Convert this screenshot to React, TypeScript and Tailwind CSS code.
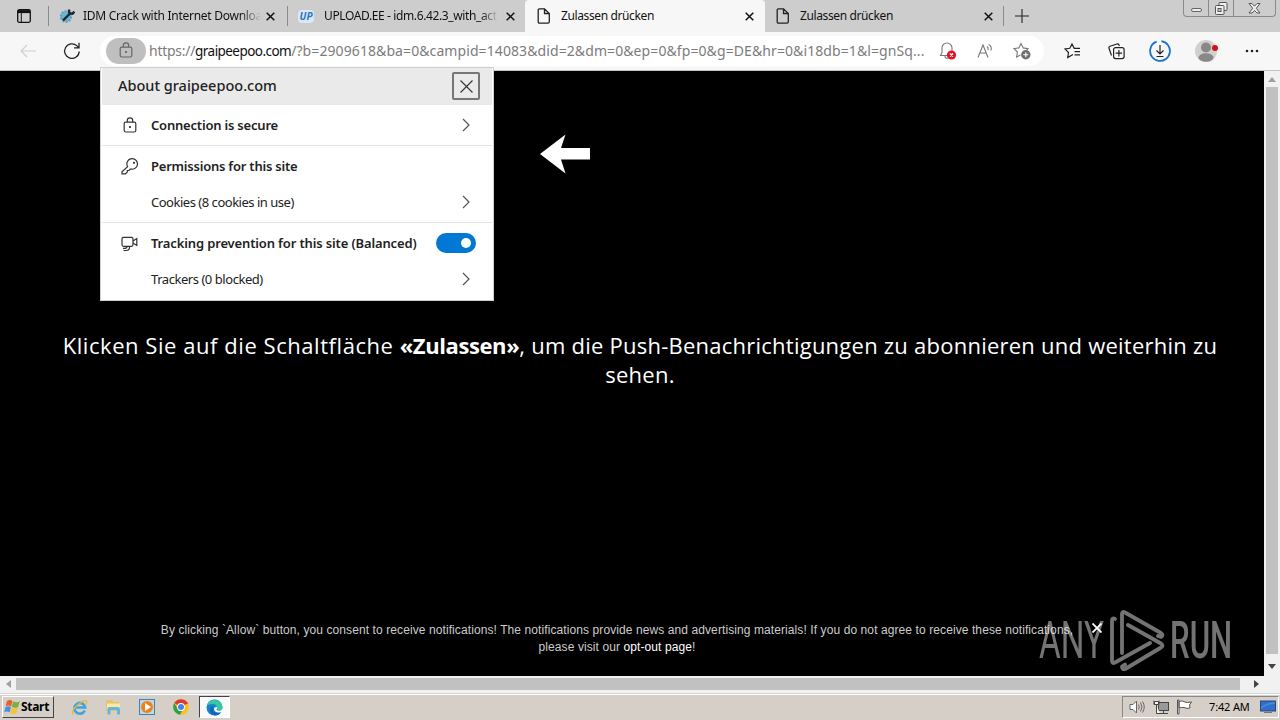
import React from "react";

type P = { children?: React.ReactNode; className?: string };

const Close = ({ className = "" }: P) => (
  <svg className={className} width="9" height="9" viewBox="0 0 9 9" fill="none" stroke="currentColor" strokeWidth="1.5">
    <path d="M.7.7l7.6 7.6M8.3.7L.7 8.3" />
  </svg>
);

const PageIcon = () => (
  <svg width="14" height="16" viewBox="0 0 14 16" fill="none" stroke="#222" strokeWidth="1.3">
    <path d="M2.5.8h5L12.3 5.5v8.3q0 1.3-1.3 1.3H2.5q-1.3 0-1.3-1.3V2.1Q1.2.8 2.5.8zM7.5.8v4.7h4.8" />
  </svg>
);

const Lock = ({ className = "" }: P) => (
  <svg className={className} width="14" height="16" viewBox="0 0 14 16" fill="none" stroke="currentColor" strokeWidth="1.2">
    <rect x="1.2" y="5.2" width="11.6" height="9.8" rx="1.5" />
    <path d="M4.3 5V3.5a2.7 2.7 0 015.4 0V5" />
    <circle cx="7" cy="10" r=".5" fill="currentColor" />
  </svg>
);

const Chevron = () => (
  <svg className="mb-px" width="8" height="14" viewBox="0 0 8 14" fill="none" stroke="#555" strokeWidth="1.2">
    <path d="M1 1l6 6-6 6" />
  </svg>
);

function TabBar() {
  return (
    <div className="flex h-8 shrink-0 bg-[#cdcdcd] text-[12px] text-[#111]">
      <div className="flex w-12 items-center pl-[17px]">
        <svg width="14" height="14" viewBox="0 0 14 14" fill="none" stroke="#111" strokeWidth="1.3">
          <rect x=".7" y=".7" width="12.6" height="12.6" rx="1.5" />
          <path d="M1 2.6h12" strokeWidth="3" />
          <path d="M4.3 4v9" strokeWidth="1" />
        </svg>
      </div>
      <div className="flex w-[239px] items-center">
        <i className="h-5 w-px bg-[#8b8b8b]" />
        <svg className="ml-2.5" width="16" height="16" viewBox="0 0 16 16">
          <circle cx="7" cy="8.5" r="5.2" fill="#6fb3d6" stroke="#5b9fc4" strokeWidth="2" strokeDasharray="2 1.2" />
          <path d="M4 12.500L11 5.500M10 1.500l.3 3.600 3.200.6 2-2" stroke="#1c2830" strokeWidth="2.4" fill="none" />
        </svg>
        <span className="ml-2 w-[178px] bg-linear-to-r from-[#111] from-88% to-[#cdcdcd] bg-clip-text whitespace-nowrap text-transparent tracking-[-0.27px]">IDM Crack with Internet Downloa</span>
        <Close className="ml-[5px]" />
      </div>
      <div className="flex w-[238px] items-center">
        <i className="h-5 w-px bg-[#8b8b8b]" />
        <span className="ml-2.5 w-4 rounded-sm bg-[#dbe7f2] text-center text-[10px] leading-[13px] font-bold text-[#2878c8] italic">UP</span>
        <span className="ml-[10px] w-[174px] bg-linear-to-r from-[#111] from-90% to-[#cdcdcd] bg-clip-text whitespace-nowrap text-transparent tracking-[-0.38px]">UPLOAD.EE - idm.6.42.3_with_act</span>
        <Close className="ml-[8px]" />
      </div>
      <div className="flex w-[240px] items-center rounded-t bg-[#f7f7f7] pl-[12px]">
        <PageIcon />
        <span className="ml-[10px] w-[184px] whitespace-nowrap tracking-[-0.38px]">Zulassen drücken</span>
        <Close />
      </div>
      <div className="flex w-[238px] items-center pl-[11px]">
        <PageIcon />
        <span className="ml-[10px] w-[184px] whitespace-nowrap tracking-[-0.38px]">Zulassen drücken</span>
        <Close />
      </div>
      <div className="flex w-[180px] items-center">
        <i className="h-5 w-px bg-[#8b8b8b]" />
        <svg className="ml-[11px]" width="14" height="14" viewBox="0 0 14 14" stroke="#222" strokeWidth="1.1"><path d="M7 0v14M0 7h14" /></svg>
      </div>
      <div className="flex h-[17px] w-[93px] rounded-b border border-t-0 border-[#8a8a8a] text-[#555]">
        <div className="flex w-[25px] items-end justify-center border-r border-[#8a8a8a] pb-1">
          <i className="h-1 w-[11px] rounded-sm border border-[#666] bg-[#eee]" />
        </div>
        <div className="flex w-[25px] items-center justify-center border-r border-[#8a8a8a]">
          <svg width="13" height="13" viewBox="0 0 13 13" fill="#eee" stroke="#555"><rect x="4" y=".5" width="8" height="8" rx="1" /><rect x=".5" y="3.5" width="8.5" height="9" rx="1" /><rect x="3" y="6.5" width="3" height="3" fill="#ccc" /></svg>
        </div>
        <div className="flex flex-1 items-center justify-center">
          <svg width="13" height="11" viewBox="0 0 13 11" fill="#eee" stroke="#555"><path d="M1 .5h3l2.5 2.7L9 .5h3L8.3 5.3 12 10H9L6.5 7.4 4 10H1l3.7-4.7z" /></svg>
        </div>
      </div>
    </div>
  );
}

function Toolbar() {
  return (
    <div className="flex h-[39px] shrink-0 items-center border-b border-[#c4c4c4] bg-[#f7f7f7]">
      <svg className="ml-5" width="16" height="14" viewBox="0 0 16 14" fill="none" stroke="#cfcfcf" strokeWidth="1.2"><path d="M16 7H1M7 1L1 7l6 6" /></svg>
      <svg className="ml-[27px]" width="18" height="18" viewBox="0 0 18 18" fill="none" stroke="#222" strokeWidth="1.3"><path d="M16.2 9.4A7.3 7.3 0 1 1 14 3.9L15.8 5.7M16 .8v5h-5" /></svg>
      <div className="ml-[19px] flex h-[30px] w-[944px] items-center rounded-full bg-white">
        <div className="ml-1.5 flex h-[26px] w-10 items-center justify-center rounded-full bg-[#bfbfbf] text-[#666]">
          <Lock className="mb-0.5" />
        </div>
        <div className="ml-[3px] w-[776px] text-[14px] leading-5 whitespace-nowrap text-[#7c7c7c]">
          <span className="tracking-[-0.27px]">https://</span><span className="text-[13.500px] tracking-[-0.550px] text-[#111]">graipeepoo.com</span><span className="tracking-[0.09px]">/?b=2909618&amp;ba=0&amp;campid=14083&amp;did=2&amp;dm=0&amp;ep=0&amp;fp=0&amp;g=DE&amp;hr=0&amp;i18db=1&amp;l=gnSq...</span>
        </div>
        <svg className="ml-[14px]" width="20" height="18" viewBox="0 0 20 18" fill="none" stroke="#777" strokeWidth="1.1">
          <path d="M9 13.5H1.5L3 10.500V6a5 5 0 0110 0v3M6 14a2 2 0 003 2" />
          <circle cx="12.500" cy="13" r="4.600" fill="#e81123" stroke="none" />
          <path d="M11 11.500l3 3m0-3l-3 3" stroke="#fff" strokeWidth="1.4" />
        </svg>
        <svg className="ml-[18px]" width="17" height="16" viewBox="0 0 17 16" fill="none" stroke="#777" strokeWidth="1.1">
          <path d="M1 14.500L6 2l5 12.500M2.800 10h6.400M10 3.500q1.800 1.300 1 3.500M11.700 1.500q3.500 2 2.200 6" />
        </svg>
        <svg className="ml-[19px]" width="18" height="18" viewBox="0 0 18 18" fill="none" stroke="#777" strokeWidth="1.1">
          <path d="M7.500 13.100L3.600 15l.8-5L1 6.600l4.800-.7L8 1.500l2.200 4.400 4.800.7-1.600 1.700" />
          <circle cx="12.800" cy="12.800" r="4.700" fill="#6d6d6d" stroke="none" />
          <path d="M12.800 10.300v5M10.300 12.800h5" stroke="#fff" />
        </svg>
      </div>
      <svg className="ml-5" width="17" height="16" viewBox="0 0 17 16" fill="none" stroke="#222" strokeWidth="1.2">
        <path d="M9 11.500L3.700 14.500l.8-5L1 6l4.800-.7L8 1l2.200 4.300H16M10.500 8.600H16M10.500 11.800H16" />
      </svg>
      <svg className="ml-[27px]" width="17" height="17" viewBox="0 0 17 17" fill="none" stroke="#222" strokeWidth="1.2">
        <rect x="5.600" y="4.600" width="10.500" height="11" rx="2" />
        <path d="M10.900 7v6.500M7.600 10.200h6.500M3.500 12.500L1 5.300Q.5 3.800 2 3.200L9 1q1.500-.4 2 1l.4 1" />
      </svg>
      <svg className="ml-[24px]" width="22" height="22" viewBox="0 0 22 22" fill="none" stroke="#222" strokeWidth="1.2">
        <circle cx="11" cy="11" r="9.900" stroke="#1874cd" strokeWidth="1.800" strokeDasharray="57 5.200" transform="rotate(-82 11 11)" />
        <path d="M11 5v9M7.500 10.500L11 14l3.500-3.500M7.500 16.500h7" />
      </svg>
      <svg className="ml-[24px]" width="24" height="24" viewBox="0 0 24 24">
        <circle cx="11" cy="12" r="11" fill="#d2d0ce" /><circle cx="11" cy="8.500" r="5" fill="#8a8886" /><ellipse cx="11" cy="18.500" rx="7.500" ry="4.300" fill="#8a8886" /><circle cx="20" cy="9" r="3" fill="#d5101c" />
      </svg>
      <svg className="ml-[26px]" width="14" height="4" viewBox="0 0 14 4" fill="#222"><circle cx="2" cy="2" r="1.300" /><circle cx="7" cy="2" r="1.300" /><circle cx="12" cy="2" r="1.300" /></svg>
    </div>
  );
}

function SiteInfo() {
  return (
    <div className="absolute top-[67px] left-[100px] z-10 h-[234px] w-[394px] border border-[#cfcfcf] bg-white px-px text-[13px] text-[#222]">
      <div className="flex h-[37px] items-center bg-[#eaeaea] pb-[2px] pl-4">
        <span className="w-[334px] text-[14.500px] font-medium whitespace-nowrap tracking-[0px]">About graipeepoo.com</span>
        <div className="mt-px flex h-7 w-7 items-center justify-center rounded-xs border-2 border-[#767676]">
          <svg width="13" height="13" viewBox="0 0 13 13" stroke="#333" strokeWidth="1.100"><path d="M.5.5l12 12m0-12l-12 12" /></svg>
        </div>
      </div>
      <div className="flex h-[41px] items-center border-b border-[#e5e5e5] pl-[21px]">
        <Lock className="text-[#333]" />
        <span className="mt-0.5 ml-[14px] w-[311px] font-semibold tracking-[-0.200px]">Connection is secure</span>
        <Chevron />
      </div>
      <div className="flex h-[41px] items-center pl-[19px]">
        <svg width="18" height="17" viewBox="0 0 18 17" fill="none" stroke="#333" strokeWidth="1.200">
          <path d="M6.600 8.600a5.300 5.300 0 114 2.600h-1.400l-1.200 1.300H6.300v1.600L4.500 15.800H1v-2z" /><circle cx="13" cy="4.800" r=".5" />
        </svg>
        <span className="ml-3 font-semibold tracking-[-0.220px]">Permissions for this site</span>
      </div>
      <div className="flex h-[36px] items-center border-b border-[#e5e5e5] pb-[4px] pl-[49px]">
        <span className="w-[311px] tracking-[-0.480px]">Cookies (8 cookies in use)</span>
        <Chevron />
      </div>
      <div className="flex h-[41px] items-center pl-[19px]">
        <svg width="17" height="16" viewBox="0 0 17 16" fill="none" stroke="#333" strokeWidth="1.200"><rect x="1" y="1.300" width="11" height="9" rx="1.500" /><path d="M12 5l3.800-2.500v7L12 7M8.500 10.300v1.200q0 3-3.500 3H2.500M6 10.300q0 2-2 2H2" /></svg>
        <span className="ml-[13px] w-[285px] font-semibold whitespace-nowrap tracking-[-0.140px]">Tracking prevention for this site (Balanced)</span>
        <span className="mb-px flex h-5 w-10 items-center justify-end rounded-full bg-[#0078d4] pr-[5px]"><i className="h-2.5 w-2.5 rounded-full bg-white" /></span>
      </div>
      <div className="flex h-[31px] items-center pl-[49px]">
        <span className="w-[311px] tracking-[-0.450px]">Trackers (0 blocked)</span>
        <Chevron />
      </div>
    </div>
  );
}

function Watermark() {
  return (
    <div className="absolute top-[609px] left-[1039px] flex h-[63px] w-[194px] items-center font-[Roboto] text-[52px] leading-none text-white opacity-45">
      <div className="w-[66px]"><span className="inline-block origin-left scale-x-[0.64]">ANY</span></div>
      <svg className="ml-1 shrink-0" width="56" height="63" viewBox="0 0 56 63" fill="none" stroke="#fff" strokeWidth="3.800" strokeLinejoin="round" strokeLinecap="round">
        <path d="M6 10Q3 8 3 12v40q0 3 3 1.500L41 34M13 44V5q0-3 3-1.500L52 24q3 2 0 4l-3-1M19 16l33 18.500q3 2 0 4L17 59.500q-4 2-4-2l3-2" />
      </svg>
      <div className="ml-[5px]"><span className="inline-block origin-left scale-x-[0.600] font-medium">RUN</span></div>
    </div>
  );
}

function Taskbar() {
  return (
    <div className="flex h-[26px] shrink-0 items-center border-t border-white bg-[#d6cfc7] pb-px">
      <div className="ml-0.5 flex h-[22px] w-[52px] items-center border border-t-white border-r-[#444] border-b-[#444] border-l-white pl-px text-[12px] font-bold text-black">
        <svg width="16" height="16" viewBox="0 0 16 16">
          <path d="M3 2q3-2 5.500 0L7.200 7.200q-3-1.500-5.500 0z" fill="#e8602c" /><path d="M9.200 2.500q3 1.500 6.500 0L14 8.200q-3 1.500-6.200-.5z" fill="#7ab13d" />
          <path d="M1.500 8q3-1.700 5.500 0L5.700 13.500q-3-2-5.500 0z" fill="#4a90d9" /><path d="M7.600 8.500q3 1.500 6.200 0L12.500 14.500q-3 1.500-6.200-.5z" fill="#f5c33b" />
        </svg>
        <span className="ml-px tracking-[-0.300px]">Start</span>
      </div>
      <svg className="ml-[17px]" width="17" height="17" viewBox="0 0 17 17" fill="none">
        <path d="M13.800 11.500a5.400 5.400 0 11.400-3H5" stroke="#3fa4dd" strokeWidth="2.600" /><path d="M2.500 15.500Q-1 13 6 6.500T15.500 2q1 1-.5 3.500" stroke="#eab83a" strokeWidth="1.300" />
      </svg>
      <svg className="ml-[17px]" width="16" height="16" viewBox="0 0 16 16">
        <path d="M1 3l1-2h5l1 2h6v9H1z" fill="#e3c469" /><path d="M2 4.500h13v6H2z" fill="#f8e9a5" /><path d="M2.500 15.500V10q0-2 2-2H13q2 0 2 2v5.500h-3V11H5.500v4.500z" fill="#65b5dd" />
      </svg>
      <svg className="ml-[18px]" width="16" height="16" viewBox="0 0 16 16">
        <rect x=".5" y=".5" width="15" height="15" fill="#b9d9ec" stroke="#3e83b5" /><circle cx="8" cy="8" r="6" fill="#f08018" /><path d="M6 4v8L12 8z" fill="#fff" />
      </svg>
      <svg className="ml-[18px]" width="16" height="16" viewBox="0 0 16 16">
        <circle cx="8" cy="8" r="7.800" fill="#fbc116" /><path d="M8 8L1.200 4.100A7.800 7.800 0 0114.800 4.200z" fill="#de3b2f" /><path d="M8 4.200h6.800" stroke="#de3b2f" /><path d="M1.200 4.100L6 12l3 0-2 3.700A7.800 7.800 0 011.200 4.100z" fill="#2c9f51" />
        <circle cx="8" cy="8" r="3.900" fill="#fff" /><circle cx="8" cy="8" r="3" fill="#4284f3" />
      </svg>
      <div className="ml-[10px] flex h-[22px] w-[31px] items-center justify-center border border-t-[#444] border-r-white border-b-white border-l-[#444] bg-[#fafafa]">
        <svg width="17" height="17" viewBox="0 0 17 17">
          <circle cx="8.500" cy="8.500" r="8" fill="#1584cf" /><path d="M.7 7A8 8 0 0116.500 8q0 3.500-4 3.500-2.500 0-2-1.500.8-1 .4-2Q10 5 6.500 5 2.500 5 .7 7z" fill="#39c6a4" />
          <path d="M6.500 8.500q-.2 5 4.500 5.700 2 .2 4.300-1.200Q13 16.500 9 16.500 3 14 4 10q.8-2.600 4-3-1.300.5-1.500 1.500z" fill="#1560b5" /><path d="M11 8q0 2-.7 2.500.8 1.300 3 1.200 2-.2 3.200-2l.5 1.500-1.500 2-3.500.3q-4-.7-4-3.700Q8.500 7.500 11 8z" fill="#fafafa" />
        </svg>
      </div>
      <div className="mr-px ml-auto flex h-[22px] w-[157px] items-center border border-t-[#888] border-r-white border-b-white border-l-[#888] pl-[6px] text-black">
        <svg width="17" height="16" viewBox="0 0 17 16" fill="#fff" stroke="#666"><path d="M1 5.500h3L7.500 2v12L4 10.500H1z" /><path d="M9.500 5.500q1.500 2.500 0 5M11.500 3.500q3 4.500 0 9M13.500 2.500q3.500 5.500 0 11" fill="none" /></svg>
        <svg className="ml-[7px]" width="17" height="16" viewBox="0 0 17 16" fill="#f5f5f5" stroke="#444"><rect x="5.500" y="3.500" width="10" height="8" fill="#999" /><path d="M7 14.500h8M10.500 12v2M1 1.500v4h5v-4M3.500 6v8.500H7" /><path d="M1.500 2.500h4v3h-4z" /></svg>
        <svg className="ml-[7px]" width="16" height="16" viewBox="0 0 16 16" fill="#fff" stroke="#555"><path d="M.5 1v14H2V1zM2 2.500q3-1.500 6 .5 1 1 6.500 0L12.500 6l.5 3q-3 1-6-.5-2-.5-5 .5z" /></svg>
        <span className="ml-[16px] w-[51px] text-[11px] whitespace-nowrap tracking-[-0.150px]">7:42 AM</span>
        <svg width="16" height="14" viewBox="0 0 16 14"><rect x=".5" y="1" width="15" height="10" fill="#2e6fce" stroke="#2b4776" /><path d="M1 7q7-5 14-5v2Q7 4 1 9z" fill="#4b88d8" /><path d="M4 12.500h8" stroke="#777" /></svg>
      </div>
    </div>
  );
}

export default function App() {
  return (
    <div className="relative flex h-[720px] w-[1280px] flex-col overflow-hidden bg-[#f1f1f1] font-['Noto_Sans','Open_Sans',sans-serif]">
      <TabBar />
      <Toolbar />
      <div className="flex h-[605px] shrink-0">
        <main className="flex w-[1264px] flex-col bg-black text-white">
          <svg className="mt-[63px] ml-[540px]" width="50" height="40" viewBox="0 0 50 40" fill="#fff"><path d="M0 20L25.500 .5 21 14h29v11.500H21l4.500 14z" /></svg>
          <h1 className="mt-[157px] w-[1280px] text-center font-['Open_Sans',sans-serif] text-[22px] leading-[29px] tracking-[0.240px] whitespace-nowrap">
            <span className="tracking-[0.550px]">Klicken Sie auf die Schaltfläche </span><b className="tracking-[-0.400px]">«Zulassen»</b>, um die Push-Benachrichtigungen zu abonnieren und weiterhin zu<br />sehen.
          </h1>
          <div className="mt-[233px] flex pl-[160px] font-['Liberation_Sans',sans-serif] text-[12px] leading-[17px] text-[#ccc]">
            <p className="w-[914px] text-center whitespace-nowrap tracking-[0.092px]">
              By clicking `Allow` button, you consent to receive notifications! The notifications provide news and advertising materials! If you do not agree to receive these notifications,<br />please visit our <span className="text-white">opt-out page</span>!
            </p>
          </div>
        </main>
        <div className="flex w-4 flex-col items-center bg-[#f1f1f1]">
          <svg className="mt-[6px]" width="8" height="5" viewBox="0 0 8 5" fill="#a0a0a0"><path d="M0 5l4-5 4 5z" /></svg>
          <div className="mt-[5px] h-[567px] w-3 bg-[#c1c1c1]" />
          <svg className="mt-[10px]" width="8" height="5" viewBox="0 0 8 5" fill="#444"><path d="M0 0l4 5 4-5z" /></svg>
        </div>
      </div>
      <div className="flex h-[18px] shrink-0 items-center border-b border-[#d5d5d5] pb-px">
        <svg className="ml-1.5" width="5" height="8" viewBox="0 0 5 8" fill="#a0a0a0"><path d="M5 0L0 4l5 4z" /></svg>
        <div className="ml-[5px] h-3 w-[1224px] bg-[#c1c1c1]" />
        <svg className="ml-[14px]" width="5" height="8" viewBox="0 0 5 8" fill="#444"><path d="M0 0l5 4-5 4z" /></svg>
      </div>
      <Taskbar />
      <SiteInfo />
      <Watermark />
      <svg className="absolute top-[623px] left-[1092px]" width="10" height="10" viewBox="0 0 10 10" stroke="#fff" strokeWidth="1.800"><path d="M.5.500l9 9m0-9l-9 9" /></svg>
    </div>
  );
}
